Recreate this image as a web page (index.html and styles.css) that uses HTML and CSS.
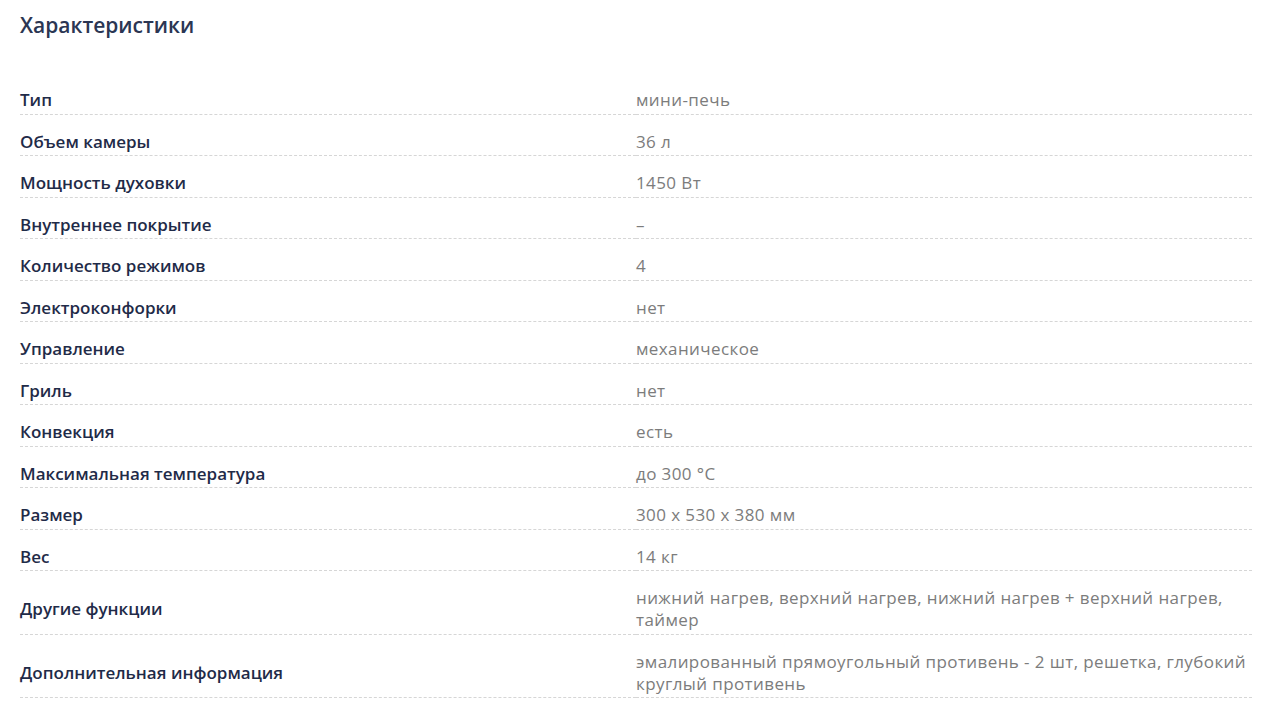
FILE: index.html
```html
<!DOCTYPE html>
<html lang="ru">

<head>
    <meta charset="UTF-8" />
    <title>Характеристики</title>
    <link rel="stylesheet" href="styles.css">
</head>

<body>

    <div class="specs">
        <h2 class="specs-title">Характеристики</h2>

        <!-- Таблица характеристик -->
        <table class="specs-table">
            <tr><td class="spec-name">Тип</td><td class="spec-value">мини-печь</td></tr>
            <tr><td class="spec-name">Объем камеры</td><td class="spec-value">36 л</td></tr>
            <tr><td class="spec-name">Мощность духовки</td><td class="spec-value">1450 Вт</td></tr>
            <tr><td class="spec-name">Внутреннее покрытие</td><td class="spec-value">–</td></tr>
            <tr><td class="spec-name">Количество режимов</td><td class="spec-value">4</td></tr>
            <tr><td class="spec-name">Электроконфорки</td><td class="spec-value">нет</td></tr>
            <tr><td class="spec-name">Управление</td><td class="spec-value">механическое</td></tr>
            <tr><td class="spec-name">Гриль</td><td class="spec-value">нет</td></tr>
            <tr><td class="spec-name">Конвекция</td><td class="spec-value">есть</td></tr>
            <tr><td class="spec-name">Максимальная температура</td><td class="spec-value">до 300 °C</td></tr>
            <tr><td class="spec-name">Размер</td><td class="spec-value">300 x 530 x 380 мм</td></tr>
            <tr><td class="spec-name">Вес</td><td class="spec-value">14 кг</td></tr>
            <tr><td class="spec-name">Другие функции</td><td class="spec-value">нижний нагрев, верхний нагрев, нижний нагрев + верхний нагрев, таймер</td></tr>
            <tr><td class="spec-name">Дополнительная информация</td><td class="spec-value">эмалированный прямоугольный противень - 2 шт, решетка, глубокий круглый противень</td></tr>
        </table>
    </div>

</body>

</html>
```

FILE: styles.css
```css
body {
    margin: 0;
    background: #fff;
    font-family: "Open Sans", Arial, sans-serif;
}

.specs {
    padding: 11px 28px 0 20px;
}

.specs-title {
    margin: 0 0 34px;
    font-size: 21px;
    line-height: 28px;
    font-weight: 600;
    color: #2b3653;
}

/* Таблица */
.specs-table {
    width: 100%;
    border-collapse: collapse;
}

.specs-table td {
    padding: 16px 0 2.5px;
    line-height: 22px;
    vertical-align: middle;
    border-bottom: 1px dashed #d6d6d6;
}

.spec-name {
    width: 50%;
    font-size: 17px;
    font-weight: 600;
    color: #1f2b48;
}

.spec-value {
    padding-right: 4px;
    font-size: 17px;
    letter-spacing: 0.4px;
    color: #7c7c7c;
}
```
